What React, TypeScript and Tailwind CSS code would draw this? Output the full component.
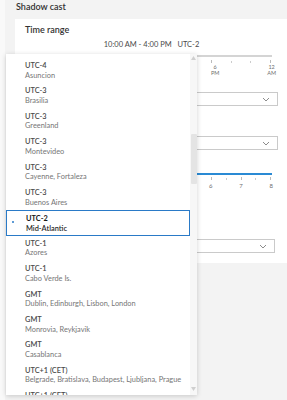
import React from "react";

const zones = [
  { t: "UTC-4", s: "Asuncion" },
  { t: "UTC-3", s: "Brasilia" },
  { t: "UTC-3", s: "Greenland" },
  { t: "UTC-3", s: "Montevideo" },
  { t: "UTC-3", s: "Cayenne, Fortaleza" },
  { t: "UTC-3", s: "Buenos Aires" },
  { t: "UTC-2", s: "Mid-Atlantic", sel: true },
  { t: "UTC-1", s: "Azores" },
  { t: "UTC-1", s: "Cabo Verde Is." },
  { t: "GMT", s: "Dublin, Edinburgh, Lisbon, London" },
  { t: "GMT", s: "Monrovia, Reykjavik" },
  { t: "GMT", s: "Casablanca" },
  { t: "UTC+1 (CET)", s: "Belgrade, Bratislava, Budapest, Ljubljana, Prague" },
  { t: "UTC+1 (CET)", s: "Sarajevo, Skopje, Warsaw, Zagreb" },
];

const Chevron = () => (
  <svg width="8" height="5" viewBox="0 0 8 5" fill="none">
    <path d="M1 1l3 3 3-3" stroke="#6e6e6e" strokeWidth="0.8" />
  </svg>
);

const Select = ({ right = 0 }: { right?: number }) => (
  <div
    className="h-[14px] border border-[#cacaca] bg-white flex items-center justify-end pr-[7px]"
    style={{ marginRight: right }}
  >
    <Chevron />
  </div>
);

const App = (): JSX.Element => {
  return (
    <div className="relative w-[287px] h-[400px] overflow-hidden bg-[#f3f3f3] font-['Lato',sans-serif] text-[#323232]">
      <div className="absolute left-0 top-0 w-[5px] h-full bg-[#f9f9f9]" />
      <div className="h-[19px] pl-[16px] pt-[1px] text-[9px] font-semibold leading-[12px]">Shadow cast</div>
      <div className="ml-[15px] h-[244px] bg-white pl-[10px] pr-[9px] pt-[6px]">
        <div className="text-[9px] font-semibold leading-[10px]">Time range</div>
        <div className="mt-[5px] text-center text-[7.5px] text-[#4a4a4a] leading-[10px]">
          10:00 AM - 4:00 PM&nbsp;&nbsp;&nbsp;UTC-2
        </div>
        <div className="mt-[5px] mr-[6px] h-[2px] bg-[#d4d4d4]" />
        <div className="mr-[7px] flex justify-between pl-[186px] h-[6px] items-end">
          <span className="w-px h-[3px] bg-[#bbb]" />
          <span className="w-px h-[2px] bg-[#ccc]" />
          <span className="w-px h-[2px] bg-[#ccc]" />
          <span className="w-px h-[3px] bg-[#bbb]" />
        </div>
        <div className="mr-[2px] flex justify-between pl-[186px] text-[5.5px] leading-[6px] text-[#6e6e6e] mt-[1px]">
          <span className="text-center">6<br />PM</span>
          <span className="text-center">12<br />AM</span>
        </div>
        <div className="mt-[16px]"><Select /></div>
        <div className="mt-[30px]"><Select /></div>
        <div className="mt-[23px] mr-[6px] h-[2px] bg-[#2a8ad4]" />
        <div className="mr-[7px] flex justify-between pl-[186px] h-[5px] items-end">
          <span className="w-px h-[3px] bg-[#bbb]" />
          <span className="w-px h-[2px] bg-[#ccc]" />
          <span className="w-px h-[3px] bg-[#bbb]" />
          <span className="w-px h-[2px] bg-[#ccc]" />
          <span className="w-px h-[3px] bg-[#bbb]" />
        </div>
        <div className="mr-[5px] flex justify-between pl-[184px] text-[6px] leading-[8px] text-[#6e6e6e] mt-[2px]">
          <span>6</span>
          <span>7</span>
          <span>8</span>
        </div>
        <div className="mt-[49px]"><Select right={3} /></div>
      </div>

      <div className="absolute left-[6px] top-[54px] w-[191px] h-[341px] bg-white overflow-hidden shadow-[0_1px_5px_rgba(0,0,0,0.18)] flex">
        <div className="flex-1 pt-[4px]">
          {zones.map((z, i) => (
            <div
              key={i}
              className={
                "relative h-[25.4px] pl-[19px] pt-[3px] leading-[9.6px] text-[7.4px] " +
                (z.sel ? "border border-[#2a7ac7] pl-[18px] pt-[2px]" : "")
              }
            >
              {z.sel && <span className="absolute left-[5px] top-[10px] w-[2px] h-[2px] rounded-full bg-[#2a7ac7]" />}
              <div className={z.sel ? "font-bold text-[#151515]" : "font-semibold text-[#4a4a4a]"}>{z.t}</div>
              <div className={z.sel ? "font-semibold text-[#2b2b2b]" : "text-[#767676]"}>{z.s}</div>
            </div>
          ))}
        </div>
        <div className="w-[7px] h-full bg-[#f7f7f7] flex flex-col items-center pt-[2px]">
          <svg width="5" height="4" viewBox="0 0 5 4"><path d="M2.5 0L5 4H0z" fill="#cfcfcf" /></svg>
          <div className="mt-[74px] w-[6px] h-[50px] bg-[#e4e4e4] rounded-[1px]" />
          <div className="flex-1" />
          <svg width="5" height="4" viewBox="0 0 5 4" className="mb-[4px]"><path d="M0 0h5L2.5 4z" fill="#cfcfcf" /></svg>
        </div>
      </div>
    </div>
  );
};

export default App;
